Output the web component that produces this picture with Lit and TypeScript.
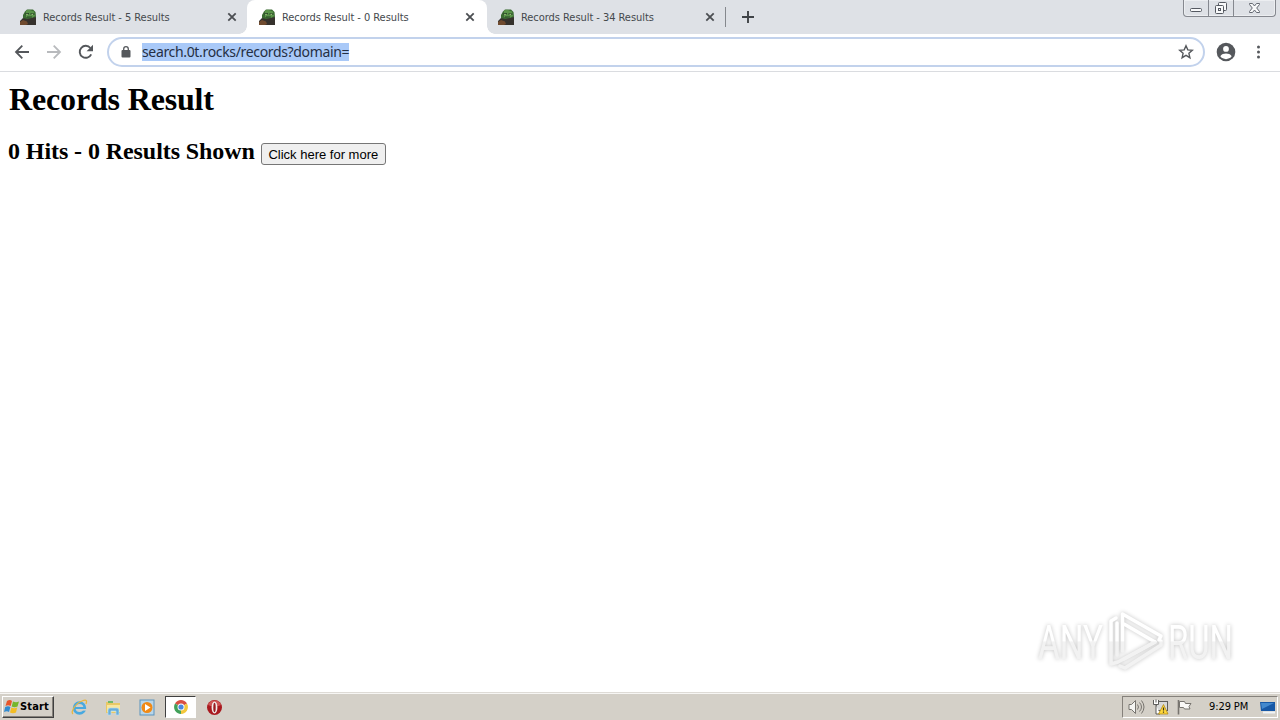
import { html, css, svg, LitElement } from 'lit';
import { customElement, property } from 'lit/decorators.js';
import { classMap } from 'lit/directives/class-map.js';

@customElement('browser-tab')
export class BrowserTab extends LitElement {
  static styles = css`
    :host {
      display: block;
      width: 239px;
      height: 34px;
      flex: none;
    }

    .tab {
      display: flex;
      align-items: center;
      box-sizing: border-box;
      height: 34px;
      padding: 0 10px 0 12px;
      color: #45494d;
      position: relative;
    }

    .tab--active {
      background: #fff;
      border-radius: 8px 8px 0 0;
      width: 240px;
      padding-right: 12px;
    }

    .tab--active::before,
    .tab--active::after {
      content: '';
      position: absolute;
      bottom: 0;
      width: 8px;
      height: 8px;
    }

    .tab--active::before {
      left: -8px;
      background: radial-gradient(circle at 0 0, transparent 7.5px, #fff 8px);
    }

    .tab--active::after {
      right: -8px;
      background: radial-gradient(circle at 100% 0, transparent 7.5px, #fff 8px);
    }

    .title {
      flex: 1;
      margin-left: 7px;
      padding-top: 1px;
      font: 11px/16px 'DejaVu Sans Condensed', 'DejaVu Sans', sans-serif;
      font-stretch: condensed;
      letter-spacing: -0.05px;
      white-space: nowrap;
    }

    svg {
      display: block;
      flex: none;
    }
  `;

  @property({ type: String }) label = '';
  @property({ type: Boolean }) active = false;

  render() {
    return html`
      <div class=${classMap({ tab: true, 'tab--active': this.active })}>
        <svg width="16" height="16" viewBox="0 0 16 16">
          <path d="M3 6 5 2.500 7 .5h6l2.500 2.500.5 5-2 3H5L3 9z" fill="#3b6a32" />
          <path d="M6 1.500 9 .8l5 1.700L15 7l-3 2-6-1z" fill="#5a9449" />
          <path d="M5.500 5 9 4.700M10.500 5l4 .2" stroke="#274427" stroke-width="1.300" />
          <path d="M6.200 5.400h1.600M11.500 5.400h1.600" stroke="#a5c780" />
          <path d="M0 16v-4l3-3 4 1 5-1 4-1v8z" fill="#36322d" />
          <path d="M0 13 3 11l4 1.500L8 15l-2 1H0z" fill="#704b2f" />
          <path d="M7 8h5" stroke="#274427" />
        </svg>
        <span class="title">${this.label}</span>
        <svg width="10" height="10" viewBox="0 0 10 10">
          <path d="m1.300 1.300 7.400 7.400m0-7.400L1.300 8.700" stroke="#4b4e52" stroke-width="1.800" />
        </svg>
      </div>
    `;
  }
}

const backIcon = svg`<path d="M15 8H2M8.3 1.7 2 8l6.3 6.3" fill="none" stroke="currentColor" stroke-width="1.8" />`;
const forwardIcon = svg`<path d="M1 8h13M7.7 1.7 14 8l-6.3 6.3" fill="none" stroke="currentColor" stroke-width="1.8" />`;
const reloadIcon = svg`
  <path d="M13.2 10.3A6 6 0 1 1 12.4 4" fill="none" stroke="currentColor" stroke-width="1.9" />
  <path d="M15 .8v6.4H8.6z" fill="currentColor" />
`;

@customElement('app-root')
export class AppRoot extends LitElement {
  static styles = css`
    :host {
      display: grid;
      grid-template-rows: 34px 38px 1fr 28px;
      width: 1280px;
      height: 720px;
      overflow: hidden;
      background: #fff;
      position: relative;
    }

    svg {
      display: block;
      flex: none;
    }

    .tabs {
      display: flex;
      align-items: center;
      padding-left: 8px;
      background: #dee1e6;
    }

    .divider {
      width: 1px;
      height: 20px;
      margin: 0 15px 0 0;
      background: #85888d;
    }

    .window {
      display: flex;
      align-self: flex-start;
      box-sizing: border-box;
      height: 17px;
      margin: 0 4px 0 auto;
      border: 1px solid #85888f;
      border-top: 0;
      border-radius: 0 0 4px 4px;
      box-shadow: inset 0 0 0 1px #eceef1;
    }

    .window svg + svg {
      border-left: 1px solid #85888f;
    }

    .toolbar {
      display: flex;
      align-items: center;
      box-sizing: border-box;
      padding: 0 14px;
      padding-bottom: 1px;
      border-bottom: 1px solid #dadce0;
      color: #54575b;
    }

    .forward {
      margin-left: 16px;
      color: #b8babd;
    }

    .reload {
      margin-left: 16px;
    }

    .omnibox {
      display: flex;
      align-items: center;
      box-sizing: border-box;
      width: 1098px;
      height: 30px;
      margin: 0 11px 0 13px;
      padding: 0 9px 0 12px;
      border: 2px solid #c2d2ec;
      border-radius: 15px;
    }

    .url {
      margin: 0 auto 0 11px;
      background: #a9c9f8;
      color: #252f43;
      font: 14px/18px 'Noto Sans', 'Open Sans', sans-serif;
      letter-spacing: -0.34px;
      white-space: nowrap;
    }

    .menu {
      margin-left: 14px;
    }

    .page {
      padding: 9px 8px 0;
      color: #000;
      font-family: 'Liberation Serif', serif;
    }

    h1 {
      margin: 0;
      padding-left: 1px;
      font-size: 32px;
      line-height: 36px;
      letter-spacing: -0.16px;
    }

    .summary {
      display: flex;
      margin-top: 21px;
      align-items: flex-start;
    }

    h2 {
      margin: 0;
      font-size: 24px;
      line-height: 27px;
      letter-spacing: -0.08px;
    }

    .more {
      box-sizing: border-box;
      width: 125px;
      height: 22px;
      margin: 5px 0 0 6px;
      padding: 0;
      border: 1px solid #767676;
      border-radius: 3px;
      background: #efefef;
      color: #000;
      font: 13px/19px 'Liberation Sans', sans-serif;
      white-space: nowrap;
    }

    .watermark {
      position: absolute;
      left: 1030px;
      top: 604px;
      filter: drop-shadow(0 0 2px rgba(0, 0, 0, 0.24));
      font-family: Roboto, sans-serif;
    }

    .taskbar {
      display: flex;
      align-items: center;
      box-sizing: border-box;
      padding: 1px 2px 0;
      border-top: 1px solid #dedbd6;
      background: #d4d0c8;
      box-shadow: inset 0 1px #f7f6f4;
    }

    .start {
      display: flex;
      align-items: center;
      box-sizing: border-box;
      width: 52px;
      height: 22px;
      padding: 0 1px;
      border: 1px solid;
      border-color: #fff #404040 #404040 #fff;
      box-shadow: inset -1px -1px #85817b;
      color: #000;
      font: bold 11px/16px 'DejaVu Sans Condensed', 'DejaVu Sans', sans-serif;
      font-stretch: condensed;
      letter-spacing: 0.15px;
    }

    .quick {
      display: flex;
      align-items: center;
      margin-left: 17px;
      gap: 17px;
    }

    .running {
      display: flex;
      align-items: center;
      justify-content: center;
      box-sizing: border-box;
      width: 31px;
      height: 22px;
      margin: 0 -7px 0 -8px;
      border: 1px solid;
      border-color: #404040 #fff #fff #404040;
      background: #fff;
    }

    .tray {
      display: flex;
      align-items: center;
      box-sizing: border-box;
      width: 156px;
      height: 22px;
      margin-left: auto;
      padding: 0 1px 0 5px;
      border: 1px solid;
      border-color: #85817b #fff #fff #85817b;
      gap: 7px;
    }

    .clock {
      margin: 0 2px 0 9px;
      width: 43px;
      color: #000;
      font: 11px/16px 'DejaVu Sans Condensed', 'DejaVu Sans', sans-serif;
      font-stretch: condensed;
      letter-spacing: -0.1px;
      white-space: nowrap;
    }
  `;

  renderWindowButtons() {
    return html`
      <div class="window">
        <svg width="24" height="16" viewBox="0 0 24 16" fill="#f8f9fa" stroke="#555961">
          <rect x="6.5" y="8.5" width="11" height="3" rx="1" />
        </svg>
        <svg width="24" height="16" viewBox="0 0 24 16" fill="#f8f9fa" stroke="#555961">
          <rect x="9.5" y="2.5" width="8" height="8" rx="1" />
          <rect x="6.5" y="5.5" width="8" height="8" rx="1" />
          <rect x="9.5" y="8.5" width="2" height="2" />
        </svg>
        <svg width="41" height="16" viewBox="0 0 41 16" fill="#f8f9fa" stroke="#656972">
          <path d="M15.500 3.500h3l2 2.500 2-2.500h3v1L22.700 8l2.800 3.500v1h-3l-2-2.500-2 2.500h-3v-1L18.300 8l-2.800-3.500z" />
        </svg>
      </div>
    `;
  }

  renderToolbar() {
    return html`
      <div class="toolbar">
        <svg width="16" height="16" viewBox="0 0 16 16">${backIcon}</svg>
        <svg class="forward" width="16" height="16" viewBox="0 0 16 16">${forwardIcon}</svg>
        <svg class="reload" width="16" height="16" viewBox="0 0 16 16">${reloadIcon}</svg>
        <div class="omnibox">
          <svg width="10" height="12" viewBox="0 0 10 12">
            <rect x=".5" y="4" width="9" height="7.500" rx="1" fill="#55585c" />
            <path d="M2.700 5V3a2.300 2.300 0 0 1 4.600 0v2" fill="none" stroke="#55585c" stroke-width="1.300" />
          </svg>
          <span class="url">search.0t.rocks/records?domain=</span>
          <svg width="16" height="16" viewBox="0 0 16 16">
            <path
              d="m8 1.800 1.800 4.100 4.500.4-3.400 3 1 4.400L8 11.400l-3.900 2.300 1-4.400-3.400-3 4.500-.4z"
              fill="none"
              stroke="#55585c"
              stroke-width="1.400"
            />
          </svg>
        </div>
        <svg width="20" height="20" viewBox="0 0 20 20">
          <circle cx="10" cy="10" r="9.300" fill="#55585c" />
          <circle cx="10" cy="6.900" r="2.900" fill="#fff" />
          <path d="M4.300 14.200c1-2 3.600-2.700 5.700-2.700s4.700.7 5.700 2.700a7 7 0 0 1-11.400 0z" fill="#fff" />
        </svg>
        <svg class="menu" width="16" height="16" viewBox="0 0 16 16" fill="#55585c">
          <circle cx="8.500" cy="3" r="1.500" />
          <circle cx="8.500" cy="8" r="1.500" />
          <circle cx="8.500" cy="13" r="1.500" />
        </svg>
      </div>
    `;
  }

  renderWatermark() {
    return html`
      <svg class="watermark" width="212" height="76" viewBox="0 0 212 76">
        <defs>
          <linearGradient id="fade" x1="0" y1="10" x2="0" y2="66" gradientUnits="userSpaceOnUse">
            <stop offset="0" stop-color="#fff" />
            <stop offset=".48" stop-color="#fff" />
            <stop offset=".5" stop-color="#f2f2f2" />
            <stop offset="1" stop-color="#f2f2f2" />
          </linearGradient>
        </defs>
        <g fill="url(#fade)" font-size="49">
          <text x="8" y="55" textLength="65" lengthAdjust="spacingAndGlyphs">ANY</text>
          <text x="138" y="55" textLength="65" lengthAdjust="spacingAndGlyphs">RUN</text>
        </g>
        <g fill="none" stroke="url(#fade)" stroke-width="3.500" stroke-linejoin="round" stroke-linecap="round">
          <path d="M92.500 47V10L131 32l-2 4M94 20l31 18-31 17" />
          <path d="M86 14l-5 3v43l7-2 37-20M87 19v32" />
          <path d="M131 37v4L95 64l-5-2" />
        </g>
      </svg>
    `;
  }

  renderQuickLaunch() {
    return html`
      <div class="quick">
        <svg width="17" height="17" viewBox="0 0 17 17">
          <circle cx="8.500" cy="9" r="5.300" fill="none" stroke="#48a9e0" stroke-width="2.800" />
          <path d="M4 9h10" stroke="#48a9e0" stroke-width="2" />
          <path d="M10 10.800h6" stroke="#d4d0c8" stroke-width="1.600" />
          <path d="M2 15C-1 13 5 4 11 2c5-2 5 0 4 3" fill="none" stroke="#e8b63f" stroke-width="1.300" />
        </svg>
        <svg width="17" height="17" viewBox="0 0 17 17">
          <path d="M1 3h6l1 1h7v10H1z" fill="#e8c866" />
          <path d="M3 2h5v2H3z" fill="#71b968" />
          <path d="M2 6h13v7H2z" fill="#f8e69d" />
          <path d="M3 16V11q0-2 2-2h7q2 0 2 2v5h-3v-4H6v4z" fill="#68add9" stroke="#b4ddf3" stroke-width=".7" />
        </svg>
        <svg width="17" height="17" viewBox="0 0 17 17">
          <rect x="1" y="1" width="14" height="15" fill="#b9d6e9" stroke="#5b93bd" />
          <circle cx="8" cy="8.500" r="5.500" fill="#f18a16" />
          <path d="m6 5 5.500 3.500L6 12z" fill="#fff" />
        </svg>
        <div class="running">
          <svg width="16" height="16" viewBox="0 0 16 16">
            <path d="M8 8 2 4.500A7 7 0 0 1 14 4.500z" fill="#d94f42" />
            <path d="M8 8 8 15A7 7 0 0 1 2 4.500z" fill="#42a15a" />
            <path d="M8 8 14 4.500A7 7 0 0 1 8 15z" fill="#f3c73c" />
            <circle cx="8" cy="8" r="3.500" fill="#fff" />
            <circle cx="8" cy="8" r="2.600" fill="#4b87df" />
          </svg>
        </div>
        <svg width="17" height="17" viewBox="0 0 17 17">
          <circle cx="8.500" cy="8.500" r="7.500" fill="#a9191f" />
          <path d="M2 6a7 7 0 0 1 13 0q-6 3-13 0" fill="#cf5555" />
          <ellipse cx="8.500" cy="8.500" rx="2.900" ry="6" fill="#f2eeee" />
          <ellipse cx="8.500" cy="8.500" rx="1.200" ry="4.800" fill="#9a1c20" />
        </svg>
      </div>
    `;
  }

  renderTray() {
    return html`
      <div class="tray">
        <svg width="17" height="16" viewBox="0 0 17 16" fill="#f5f5f2" stroke="#77746f">
          <path d="M1 5.500h2.500l4-4v13l-4-4H1z" />
          <path d="M9.500 5.500q2 2.500 0 5M11.500 3.500q4 4.500 0 9M13.500 1.500q5 6.500 0 13" fill="none" />
        </svg>
        <svg width="17" height="16" viewBox="0 0 17 16">
          <rect x="4.500" y="2.500" width="11" height="9" fill="#d8d9d8" stroke="#5d5d5b" />
          <path d="M1.500 1v4.500h5V1M4 .5v3M4 6v9h4" fill="#fff" stroke="#5d5d5b" />
          <path d="m11.500 5.500 4.500 9.500H6.500z" fill="#ffd83b" stroke="#b28b18" stroke-width=".8" />
          <path d="M11.500 8.500v3m0 1v1.200" stroke="#3c351d" stroke-width="1.200" />
        </svg>
        <svg width="17" height="16" viewBox="0 0 17 16">
          <path d="M2.500 1v14.500" stroke="#77746f" stroke-width="1.600" />
          <path d="M3.500 2.500h5l1 2h5.500l-2 3 1 2.500H8.500l-1-1.500h-4z" fill="#faf9f7" stroke="#77746f" />
        </svg>
        <span class="clock">9:29 PM</span>
        <svg width="16" height="16" viewBox="0 0 16 16">
          <path d="M0 3h15v9H1z" fill="#1758a6" />
          <path d="M1 4h13l-12 6z" fill="#4389ce" />
          <path d="M3 13.500h12" stroke="#eef3f7" stroke-width="2" />
        </svg>
      </div>
    `;
  }

  render() {
    return html`
      <div class="tabs">
        <browser-tab label="Records Result - 5 Results"></browser-tab>
        <browser-tab label="Records Result - 0 Results" active></browser-tab>
        <browser-tab label="Records Result - 34 Results"></browser-tab>
        <span class="divider"></span>
        <svg width="14" height="14" viewBox="0 0 14 14">
          <path d="M7 1v12M1 7h12" stroke="#3f4347" stroke-width="1.900" />
        </svg>
        ${this.renderWindowButtons()}
      </div>
      ${this.renderToolbar()}
      <main class="page">
        <h1>Records Result</h1>
        <div class="summary">
          <h2>0 Hits - 0 Results Shown</h2>
          <button class="more" type="button">Click here for more</button>
        </div>
      </main>
      <div class="taskbar">
        <div class="start">
          <svg width="16" height="16" viewBox="0 0 16 16">
            <path d="M3 2q3-2 5 0L6.700 7Q4 5.500 1.500 7z" fill="#e8562b" />
            <path d="M9 2.500q3 1.500 6 0L13.500 7.500q-3 1.500-5.800 0z" fill="#75b62c" />
            <path d="M1.200 8q3-1.500 5.200 0L5 13q-2-1.500-5 0z" fill="#328bd0" />
            <path d="M7.400 8.500q3 1.500 5.800 0L12 13.500q-3 1.500-6 0z" fill="#f3bd25" />
          </svg>
          <span>Start</span>
        </div>
        ${this.renderQuickLaunch()}
        ${this.renderTray()}
      </div>
      ${this.renderWatermark()}
    `;
  }
}

declare global {
  interface HTMLElementTagNameMap {
    'browser-tab': BrowserTab;
    'app-root': AppRoot;
  }
}
